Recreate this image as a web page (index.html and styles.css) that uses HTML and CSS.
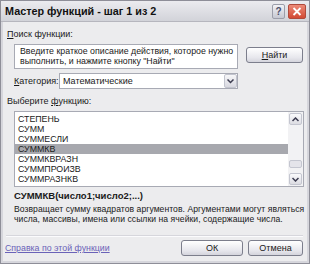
FILE: index.html
```html
<!DOCTYPE html>
<html>
<head>
<meta charset="utf-8">
<link rel="stylesheet" href="styles.css">
</head>
<body>
<div class="window">
  <div class="titlebar">
    <div class="title">Мастер функций - шаг 1 из 2</div>
    <div class="tbtn help">?</div>
    <div class="tbtn close">
      <svg width="10" height="9" viewBox="0 0 10 9"><path d="M1.5 1 L8.5 8 M8.5 1 L1.5 8" stroke="#fff" stroke-width="1.8" fill="none"/></svg>
    </div>
  </div>
  <div class="body">
    <div class="label l-search"><u>П</u>оиск функции:</div>
    <div class="search-row">
      <div class="textarea">Введите краткое описание действия, которое нужно<br>выполнить, и нажмите кнопку "Найти"</div>
      <div class="btn find"><u>Н</u>айти</div>
    </div>
    <div class="cat-row">
      <div class="label cat-label"><u>К</u>атегория:</div>
      <div class="combo">
        <span class="combo-text">Математические</span>
        <div class="combo-arrow"><svg width="7" height="5" viewBox="0 0 7 5"><path d="M0.5 0.5 L3.5 3.5 L6.5 0.5" stroke="#3c3c50" stroke-width="1.5" fill="none"/></svg></div>
      </div>
    </div>
    <div class="label l-choose">Выберите <u>ф</u>ункцию:</div>
    <div class="listbox">
      <div class="items">
        <div class="item">СТЕПЕНЬ</div>
        <div class="item">СУММ</div>
        <div class="item">СУММЕСЛИ</div>
        <div class="item sel">СУММКВ</div>
        <div class="item">СУММКВРАЗН</div>
        <div class="item">СУММПРОИЗВ</div>
        <div class="item">СУММРАЗНКВ</div>
      </div>
      <div class="scrollbar">
        <div class="sbtn"><svg width="7" height="5" viewBox="0 0 7 5"><path d="M0.5 4 L3.5 1 L6.5 4" stroke="#3c3c50" stroke-width="1.5" fill="none"/></svg></div>
        <div class="track"><div class="thumb"></div></div>
        <div class="sbtn"><svg width="7" height="5" viewBox="0 0 7 5"><path d="M0.5 1 L3.5 4 L6.5 1" stroke="#3c3c50" stroke-width="1.5" fill="none"/></svg></div>
      </div>
    </div>
    <div class="sig">СУММКВ(число1;число2;...)</div>
    <div class="desc">Возвращает сумму квадратов аргументов. Аргументами могут являться<br>числа, массивы, имена или ссылки на ячейки, содержащие числа.</div>
    <div class="sep"></div>
    <div class="footer">
      <a class="link">Справка по этой функции</a>
      <div class="btn ok">ОК</div>
      <div class="btn cancel">Отмена</div>
    </div>
  </div>
</div>
</body>
</html>
```
FILE: styles.css
```css
html, body { margin: 0; padding: 0; }
body { width: 310px; height: 264px; overflow: hidden; font-family: "Liberation Sans", Arial, sans-serif; font-size: 9px; color: #1a1a1a; }
.window { box-sizing: border-box; width: 310px; height: 264px; border: 1px solid #8e8e98; background: #ececee; display: flex; flex-direction: column; box-shadow: inset 0 0 0 2px #d6d6dc; }
.titlebar { height: 21px; box-sizing: border-box; display: flex; align-items: center; padding: 0 3px 0 4px; background: linear-gradient(#ebebef, #d2d3d9); border-bottom: 1px solid #b6b6be; }
.title { flex: 1; font-weight: bold; font-size: 10.8px; color: #111; }
.tbtn { box-sizing: border-box; height: 15px; border-radius: 2px; display: flex; align-items: center; justify-content: center; }
.help { width: 13px; margin-right: 3px; background: linear-gradient(#f2f2f6, #c6c8d2); border: 1px solid #9c9eaa; color: #4a4e6a; font-size: 10px; font-weight: bold; }
.close { width: 18px; background: linear-gradient(#ec8a78, #d24a34); border: 1px solid #b04a3c; }
.body { flex: 1; display: flex; flex-direction: column; padding: 0 6px 0 4px; }
.label { line-height: 11px; white-space: nowrap; }
.l-search { margin-top: 7px; margin-left: 2px; }
.search-row { display: flex; align-items: flex-start; margin-top: 4px; margin-left: 9px; }
.textarea { box-sizing: border-box; width: 224px; height: 25px; background: #fff; border: 1px solid #a8aab4; padding: 2px 0 0 5px; line-height: 9.5px; font-size: 8.8px; white-space: nowrap; overflow: hidden; }
.btn { box-sizing: border-box; height: 16px; border: 1px solid #7c7e8c; border-radius: 3px; background: linear-gradient(#ffffff, #e6e6ec 70%, #d4d4dc); display: flex; align-items: center; justify-content: center; font-size: 9px; }
.find { width: 57px; margin-left: 8px; margin-top: 3px; }
.cat-row { display: flex; align-items: center; margin-top: 4px; margin-left: 9px; }
.cat-label { width: 45px; }
.combo { box-sizing: border-box; width: 179px; height: 16px; background: #fff; border: 1px solid #a8aab4; display: flex; align-items: center; padding-left: 3px; }
.combo-text { flex: 1; }
.combo-arrow { width: 13px; height: 14px; box-sizing: border-box; border: 1px solid #c2c4ce; border-radius: 2px; background: linear-gradient(#f6f6f8, #d8d8e0); display: flex; align-items: center; justify-content: center; }
.l-choose { margin-top: 7px; margin-left: 2px; }
.listbox { box-sizing: border-box; margin-top: 4px; margin-left: 9px; width: 290px; height: 76px; background: #fff; border: 1px solid #a8aab4; display: flex; }
.items { flex: 1; padding-top: 2px; }
.item { height: 10px; line-height: 10px; padding-left: 3px; font-size: 8.8px; }
.item.sel { background: #a7a8ae; }
.scrollbar { width: 15px; display: flex; flex-direction: column; background: #f2f2f4; padding: 1px 0; box-sizing: border-box; }
.sbtn { height: 12px; margin: 0 1px; box-sizing: border-box; border: 1px solid #c4c6d0; border-radius: 2px; background: linear-gradient(#fafafc, #dcdce2); display: flex; align-items: center; justify-content: center; }
.track { flex: 1; display: flex; flex-direction: column; justify-content: flex-end; padding-bottom: 5px; }
.thumb { height: 6px; margin: 0 1px; border: 1px solid #c4c6d0; border-radius: 2px; background: #e4e4ea; }
.sig { margin-top: 3px; margin-left: 9px; font-weight: bold; font-size: 9.5px; line-height: 12px; }
.desc { margin-top: 3px; margin-left: 9px; line-height: 9.5px; font-size: 8.6px; letter-spacing: 0.05px; white-space: nowrap; }
.sep { margin-top: 11px; margin-left: 1px; height: 1px; background: #d6d6dc; border-bottom: 1px solid #fbfbfd; }
.footer { display: flex; align-items: center; margin-top: 3px; }
.link { flex: 1; color: #6a62b8; text-decoration: underline; font-size: 8.8px; white-space: nowrap; }
.ok { width: 62px; }
.cancel { width: 55px; margin-left: 5px; }
```
